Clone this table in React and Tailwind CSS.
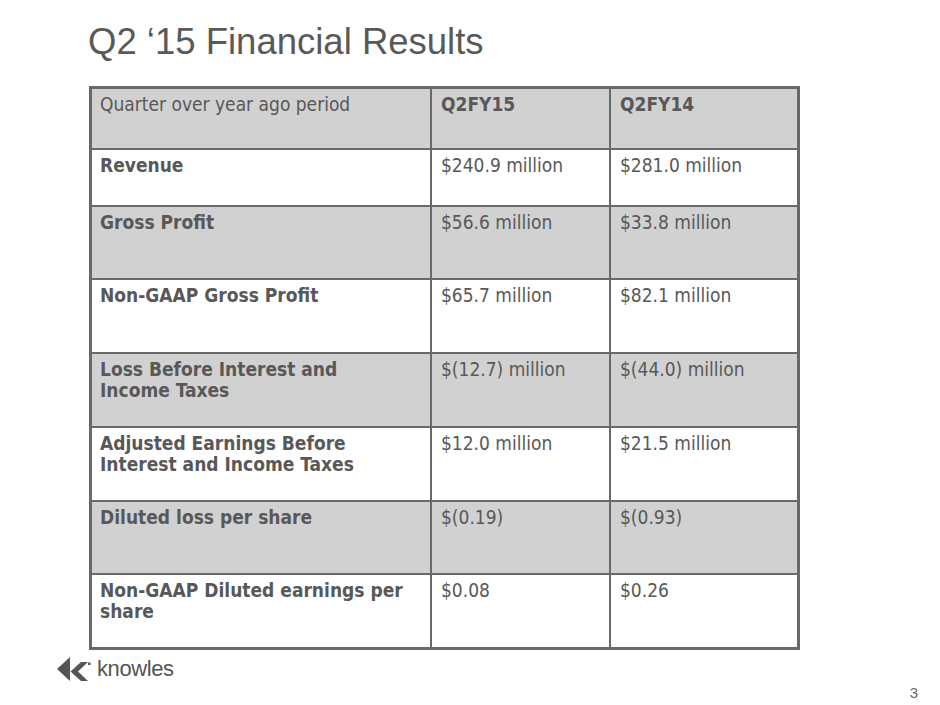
import React from "react";

const rows = [
  { label: ["Quarter over year ago period"], a: "Q2FY15", b: "Q2FY14", gray: true, head: true, h: "h-[59px]" },
  { label: ["Revenue"], a: "$240.9 million", b: "$281.0 million", gray: false, h: "h-[55px]" },
  { label: ["Gross Profit"], a: "$56.6 million", b: "$33.8 million", gray: true, h: "h-[71px]" },
  { label: ["Non-GAAP Gross Profit"], a: "$65.7 million", b: "$82.1 million", gray: false, h: "h-[72px]" },
  { label: ["Loss Before Interest and", "Income Taxes"], a: "$(12.7) million", b: "$(44.0) million", gray: true, h: "h-[72px]" },
  { label: ["Adjusted Earnings Before", "Interest and Income Taxes"], a: "$12.0 million", b: "$21.5 million", gray: false, h: "h-[72px]" },
  { label: ["Diluted loss per share"], a: "$(0.19)", b: "$(0.93)", gray: true, h: "h-[71px]" },
  { label: ["Non-GAAP Diluted earnings per", "share"], a: "$0.08", b: "$0.26", gray: false, h: "h-[72px]" },
];

function Logo() {
  return (
    <div className="flex items-center">
      <svg width="34" height="24" viewBox="0 0 34 24" className="shrink-0">
        <polygon points="0,12 13,0 13,24" fill="#555555" />
        <polygon points="13.5,14.5 24,5 31,5 21,14.5 31,24 24,24" fill="#555555" />
        <rect x="31" y="5.5" width="2.5" height="2.5" fill="#555555" />
      </svg>
      <span className="ml-[6px] text-[22px] leading-none text-[#555555] tracking-[-0.4px]" style={{ fontFamily: '"Liberation Sans", Arial, sans-serif' }}>
        knowles
      </span>
    </div>
  );
}

export default function App() {
  const font = { fontFamily: '"DejaVu Sans Condensed", "DejaVu Sans", Verdana, sans-serif' };
  return (
    <div className="w-[940px] h-[705px] bg-white relative overflow-hidden">
      <h1
        className="ml-[88px] pt-[24px] text-[36.5px] leading-[36px] text-[#595959]"
        style={{ fontFamily: '"Liberation Sans", Arial, sans-serif' }}
      >
        Q2 ‘15 Financial Results
      </h1>
      <div className="ml-[89px] mt-[26px] w-[711px] border-[3px] border-[#696969] text-[#585858] text-[19px] leading-[21px]" style={font}>
        {rows.map((r, i) => (
          <div
            key={i}
            className={`flex ${r.h} box-content ${i < rows.length - 1 ? "border-b-2 border-[#696969]" : ""} ${r.gray ? "bg-[#d1d1d1]" : "bg-white"}`}
          >
            <div className={`w-[340px] shrink-0 border-r-2 border-[#696969] pl-[8px] pt-[5px] ${r.head ? "font-normal" : "font-bold"}`}>
              {r.label.map((l, j) => (
                <div key={j}>{l}</div>
              ))}
            </div>
            <div className={`w-[179px] shrink-0 border-r-2 border-[#696969] pl-[9px] pt-[5px] ${r.head ? "font-bold" : ""}`}>{r.a}</div>
            <div className={`flex-1 pl-[9px] pt-[5px] ${r.head ? "font-bold" : ""}`}>{r.b}</div>
          </div>
        ))}
      </div>
      <div className="flex items-start justify-between pl-[57px] pr-[22px] mt-[7px]">
        <Logo />
        <span className="mt-[28px] text-[15px] leading-none text-[#666666]" style={{ fontFamily: '"Liberation Sans", Arial, sans-serif' }}>
          3
        </span>
      </div>
    </div>
  );
}
